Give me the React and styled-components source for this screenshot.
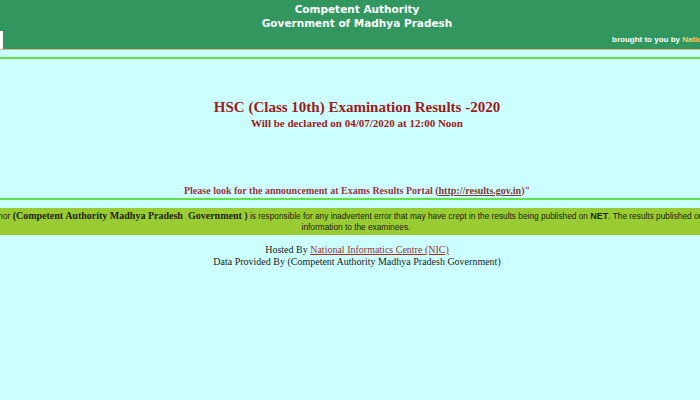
import React from "react";
import styled, { createGlobalStyle } from "styled-components";

const Global = createGlobalStyle`
  html, body { margin: 0; padding: 0; }
  body {
    width: 700px;
    height: 400px;
    overflow: hidden;
    background: #ccffff;
    font-family: "Liberation Serif", serif;
  }
`;

const Page = styled.div`
  width: 700px;
  min-height: 400px;
  background: #ccffff;
  display: flex;
  flex-direction: column;
  overflow: hidden;
`;

const Header = styled.header`
  height: 50px;
  background: #31975f;
  border-bottom: 1px solid #cdbb86;
  display: flex;
  flex-direction: column;
  box-sizing: border-box;
`;

const HeaderTitle = styled.div`
  padding: 2px 0 0 14px;
  text-align: center;
  color: #ffffff;
  font-family: "DejaVu Sans", sans-serif;
  font-weight: bold;
  font-size: 10.5px;
  line-height: 14px;
`;

const HeaderBar = styled.div`
  display: flex;
  align-items: flex-end;
  flex: 1;
`;

const SearchBox = styled.div`
  flex: none;
  width: 7px;
  height: 18px;
  margin-left: -4px;
  background: #ffffff;
`;

const Credit = styled.div`
  margin-left: 609px;
  margin-bottom: 4px;
  white-space: nowrap;
  color: #ffffff;
  font-family: "Liberation Sans", Arial, sans-serif;
  font-weight: bold;
  font-size: 8px;
  line-height: 10px;
`;

const CreditLink = styled.span`
  color: #ffcc66;
`;

const Rule = styled.div`
  height: 2px;
  background: #66e04a;
  margin-top: ${(p) => p.$top}px;
`;

const Main = styled.main`
  padding-left: 14px;
  text-align: center;
  display: flex;
  flex-direction: column;
  align-items: center;
`;

const Title = styled.h1`
  margin: ${(p) => p.$top}px 0 0;
  color: #9c1b1b;
  font-weight: bold;
  font-size: ${(p) => p.$size}px;
  line-height: ${(p) => p.$lh}px;
  white-space: nowrap;
`;

const Notice = styled.p`
  margin: 55px 0 0;
  color: #993344;
  font-weight: bold;
  font-size: 10px;
  line-height: 12px;
  white-space: nowrap;
`;

const PortalLink = styled.a`
  color: #7a3a3a;
  text-decoration: underline;
`;

const Band = styled.section`
  margin-top: 8px;
  height: 27px;
  background: #99cc33;
  display: flex;
  justify-content: center;
  align-items: center;
  padding-left: ${(p) => p.$shift}px;
`;

const BandText = styled.div`
  flex: none;
  text-align: center;
  color: #222211;
  font-family: "Liberation Sans", Arial, sans-serif;
  font-size: 8.3px;
  line-height: 11px;
`;

const BandLine = styled.div`
  white-space: nowrap;
  margin-right: ${(p) => p.$pull || 0}px;
`;

const Strong = styled.b`
  font-family: "Liberation Serif", serif;
  font-size: 10px;
`;

const Net = styled.b`
  font-size: 9px;
`;

const Footer = styled.footer`
  margin-top: 9px;
  padding-left: 14px;
  text-align: center;
  color: #222222;
  font-size: 10px;
  line-height: 12px;
`;

const FooterLink = styled.a`
  color: #993333;
  text-decoration: underline;
`;

export default function App() {
  return (
    <>
      <Global />
      <Page>
        <Header>
          <HeaderTitle>
            Competent Authority
            <br />
            Government of Madhya Pradesh
          </HeaderTitle>
          <HeaderBar>
            <SearchBox />
            <Credit>
              brought to you by <CreditLink>National Informatics Centre</CreditLink>
            </Credit>
          </HeaderBar>
        </Header>
        <Rule $top={7} />
        <Main>
          <Title $top={40} $size={15} $lh={17}>
            HSC (Class 10th) Examination Results -2020
          </Title>
          <Title as="h2" $top={0} $size={11} $lh={14}>
            Will be declared on 04/07/2020 at 12:00 Noon
          </Title>
          <Notice>
            Please look for the announcement at Exams Results Portal (
            <PortalLink href="#">http://results.gov.in</PortalLink>)"
          </Notice>
        </Main>
        <Rule $top={1} />
        <Band $shift={37}>
          <BandText>
            <BandLine>
              Neither NIC nor <Strong>(Competent Authority Madhya Pradesh&nbsp; Government )</Strong> is
              responsible for any inadvertent error that may have crept in the results being published
              on <Net>NET</Net>. The results published on net are for Immediate
            </BandLine>
            <BandLine $pull={25}>information to the examinees.</BandLine>
          </BandText>
        </Band>
        <Footer>
          Hosted By <FooterLink href="#">National Informatics Centre (NIC)</FooterLink>
          <br />
          Data Provided By (Competent Authority Madhya Pradesh Government)
        </Footer>
      </Page>
    </>
  );
}
